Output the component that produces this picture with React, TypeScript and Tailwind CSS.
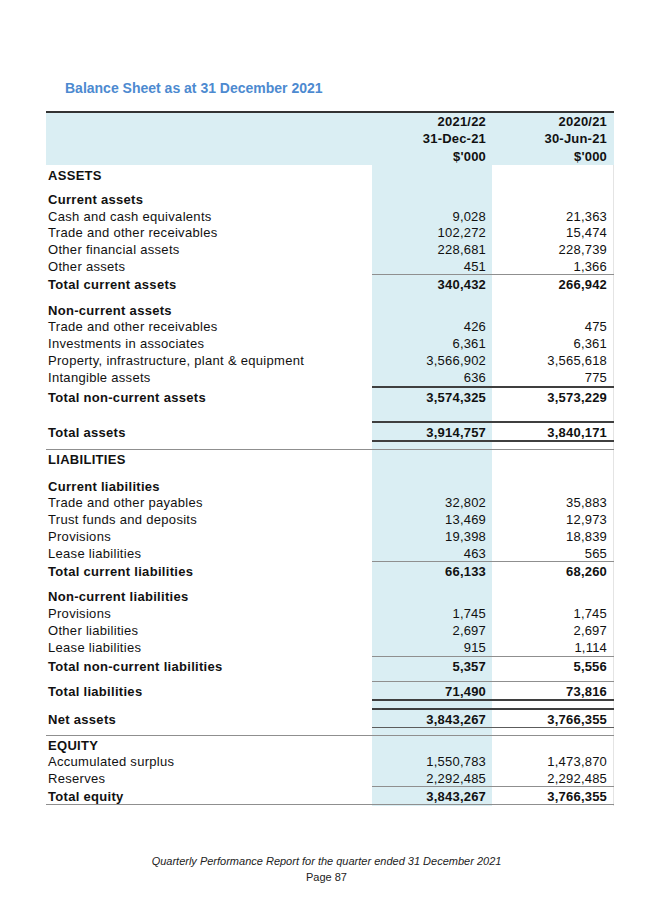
type Line =
  | { t: "row"; label: string; a?: string; b?: string; bold?: boolean; h?: string }
  | { t: "gap"; h: string }
  | { t: "rule"; c: string; full?: boolean };

const GRAY = "h-px bg-[#8f8f8f]";
const DARK = "h-[2px] bg-[#3f3f3f]";

const lines: Line[] = [
  { t: "row", label: "ASSETS", bold: true, h: "h-[22px]" },
  { t: "gap", h: "h-[2.8px]" },
  { t: "row", label: "Current assets", bold: true },
  { t: "row", label: "Cash and cash equivalents", a: "9,028", b: "21,363" },
  { t: "row", label: "Trade and other receivables", a: "102,272", b: "15,474" },
  { t: "row", label: "Other financial assets", a: "228,681", b: "228,739" },
  { t: "row", label: "Other assets", a: "451", b: "1,366" },
  { t: "rule", c: GRAY },
  { t: "row", label: "Total current assets", a: "340,432", b: "266,942", bold: true },
  { t: "gap", h: "h-[9px]" },
  { t: "row", label: "Non-current assets", bold: true },
  { t: "row", label: "Trade and other receivables", a: "426", b: "475" },
  { t: "row", label: "Investments in associates", a: "6,361", b: "6,361" },
  { t: "row", label: "Property, infrastructure, plant & equipment", a: "3,566,902", b: "3,565,618" },
  { t: "row", label: "Intangible assets", a: "636", b: "775" },
  { t: "gap", h: "h-px" },
  { t: "rule", c: DARK },
  { t: "row", label: "Total non-current assets", a: "3,574,325", b: "3,573,229", bold: true },
  { t: "gap", h: "h-[17px]" },
  { t: "rule", c: DARK },
  { t: "row", label: "Total assets", a: "3,914,757", b: "3,840,171", bold: true },
  { t: "rule", c: DARK },
  { t: "gap", h: "h-[6.5px]" },
  { t: "rule", c: GRAY, full: true },
  { t: "row", label: "LIABILITIES", bold: true, h: "h-[21px]" },
  { t: "gap", h: "h-[6px]" },
  { t: "row", label: "Current liabilities", bold: true },
  { t: "row", label: "Trade and other payables", a: "32,802", b: "35,883" },
  { t: "row", label: "Trust funds and deposits", a: "13,469", b: "12,973" },
  { t: "row", label: "Provisions", a: "19,398", b: "18,839" },
  { t: "row", label: "Lease liabilities", a: "463", b: "565" },
  { t: "rule", c: GRAY },
  { t: "row", label: "Total current liabilities", a: "66,133", b: "68,260", bold: true },
  { t: "gap", h: "h-[9px]" },
  { t: "row", label: "Non-current liabilities", bold: true },
  { t: "row", label: "Provisions", a: "1,745", b: "1,745" },
  { t: "row", label: "Other liabilities", a: "2,697", b: "2,697" },
  { t: "row", label: "Lease liabilities", a: "915", b: "1,114" },
  { t: "gap", h: "h-px" },
  { t: "rule", c: GRAY },
  { t: "row", label: "Total non-current liabilities", a: "5,357", b: "5,556", bold: true },
  { t: "gap", h: "h-[8px]" },
  { t: "rule", c: GRAY },
  { t: "row", label: "Total liabilities", a: "71,490", b: "73,816", bold: true },
  { t: "rule", c: DARK },
  { t: "gap", h: "h-[6.5px]" },
  { t: "rule", c: DARK },
  { t: "row", label: "Net assets", a: "3,843,267", b: "3,766,355", bold: true },
  { t: "rule", c: "h-px bg-[#5c5c5c]" },
  { t: "gap", h: "h-[7px]" },
  { t: "rule", c: GRAY, full: true },
  { t: "row", label: "EQUITY", bold: true },
  { t: "row", label: "Accumulated surplus", a: "1,550,783", b: "1,473,870" },
  { t: "row", label: "Reserves", a: "2,292,485", b: "2,292,485" },
  { t: "rule", c: GRAY },
  { t: "row", label: "Total equity", a: "3,843,267", b: "3,766,355", bold: true },
  { t: "rule", c: GRAY, full: true },
];

const grid = "grid grid-cols-[326px_120px_122px]";

function Item({ line }: { line: Line }) {
  if (line.t === "rule") {
    return (
      <div className={grid}>
        <div className={line.full ? line.c : "bg-white"} />
        <div className={line.c} />
        <div className={line.c} />
      </div>
    );
  }
  if (line.t === "gap") {
    return (
      <div className={`${grid} ${line.h}`}>
        <div />
        <div className="bg-[#daeef3]" />
        <div className="border-r border-[#e4e4e4]" />
      </div>
    );
  }
  const weight = line.bold ? "font-bold" : "font-normal";
  return (
    <div className={`${grid} ${line.h ?? "h-[16.8px]"} items-stretch`}>
      <div className={`flex items-center pl-[2px] tracking-[0.3px] ${weight}`}>{line.label}</div>
      <div className={`flex items-center justify-end bg-[#daeef3] pr-[6px] ${weight}`}>{line.a}</div>
      <div className={`flex items-center justify-end border-r border-[#e4e4e4] pr-[6px] ${weight}`}>
        {line.b}
      </div>
    </div>
  );
}

export default function App() {
  return (
    <div className="min-h-[923px] w-[653px] bg-white font-['Liberation_Sans',Arial,sans-serif] text-[#111]">
      <div className="pl-[46px] pt-[80px]">
        <h1 className="ml-[19px] text-[14px] font-bold leading-[17px] text-[#4d8ad0]">
          Balance Sheet as at 31 December 2021
        </h1>

        <div className="mt-[14px] w-[568px] text-[13px] tracking-[0.2px]">
          <div className="h-[2px] bg-[#333]" />
          <div className={`${grid} h-[52px] bg-[#daeef3] font-bold leading-[17.3px]`}>
            <div />
            <div className="flex flex-col items-end pr-[6px]">
              <span>2021/22</span>
              <span>31-Dec-21</span>
              <span>$'000</span>
            </div>
            <div className="flex flex-col items-end pr-[7px]">
              <span>2020/21</span>
              <span>30-Jun-21</span>
              <span>$'000</span>
            </div>
          </div>
          {lines.map((line, i) => (
            <Item key={i} line={line} />
          ))}
        </div>
      </div>

      <footer className="mt-[48px] text-center text-[11px] leading-[16px] text-[#222]">
        <p className="italic">Quarterly Performance Report for the quarter ended 31 December 2021</p>
        <p>Page 87</p>
      </footer>
    </div>
  );
}
